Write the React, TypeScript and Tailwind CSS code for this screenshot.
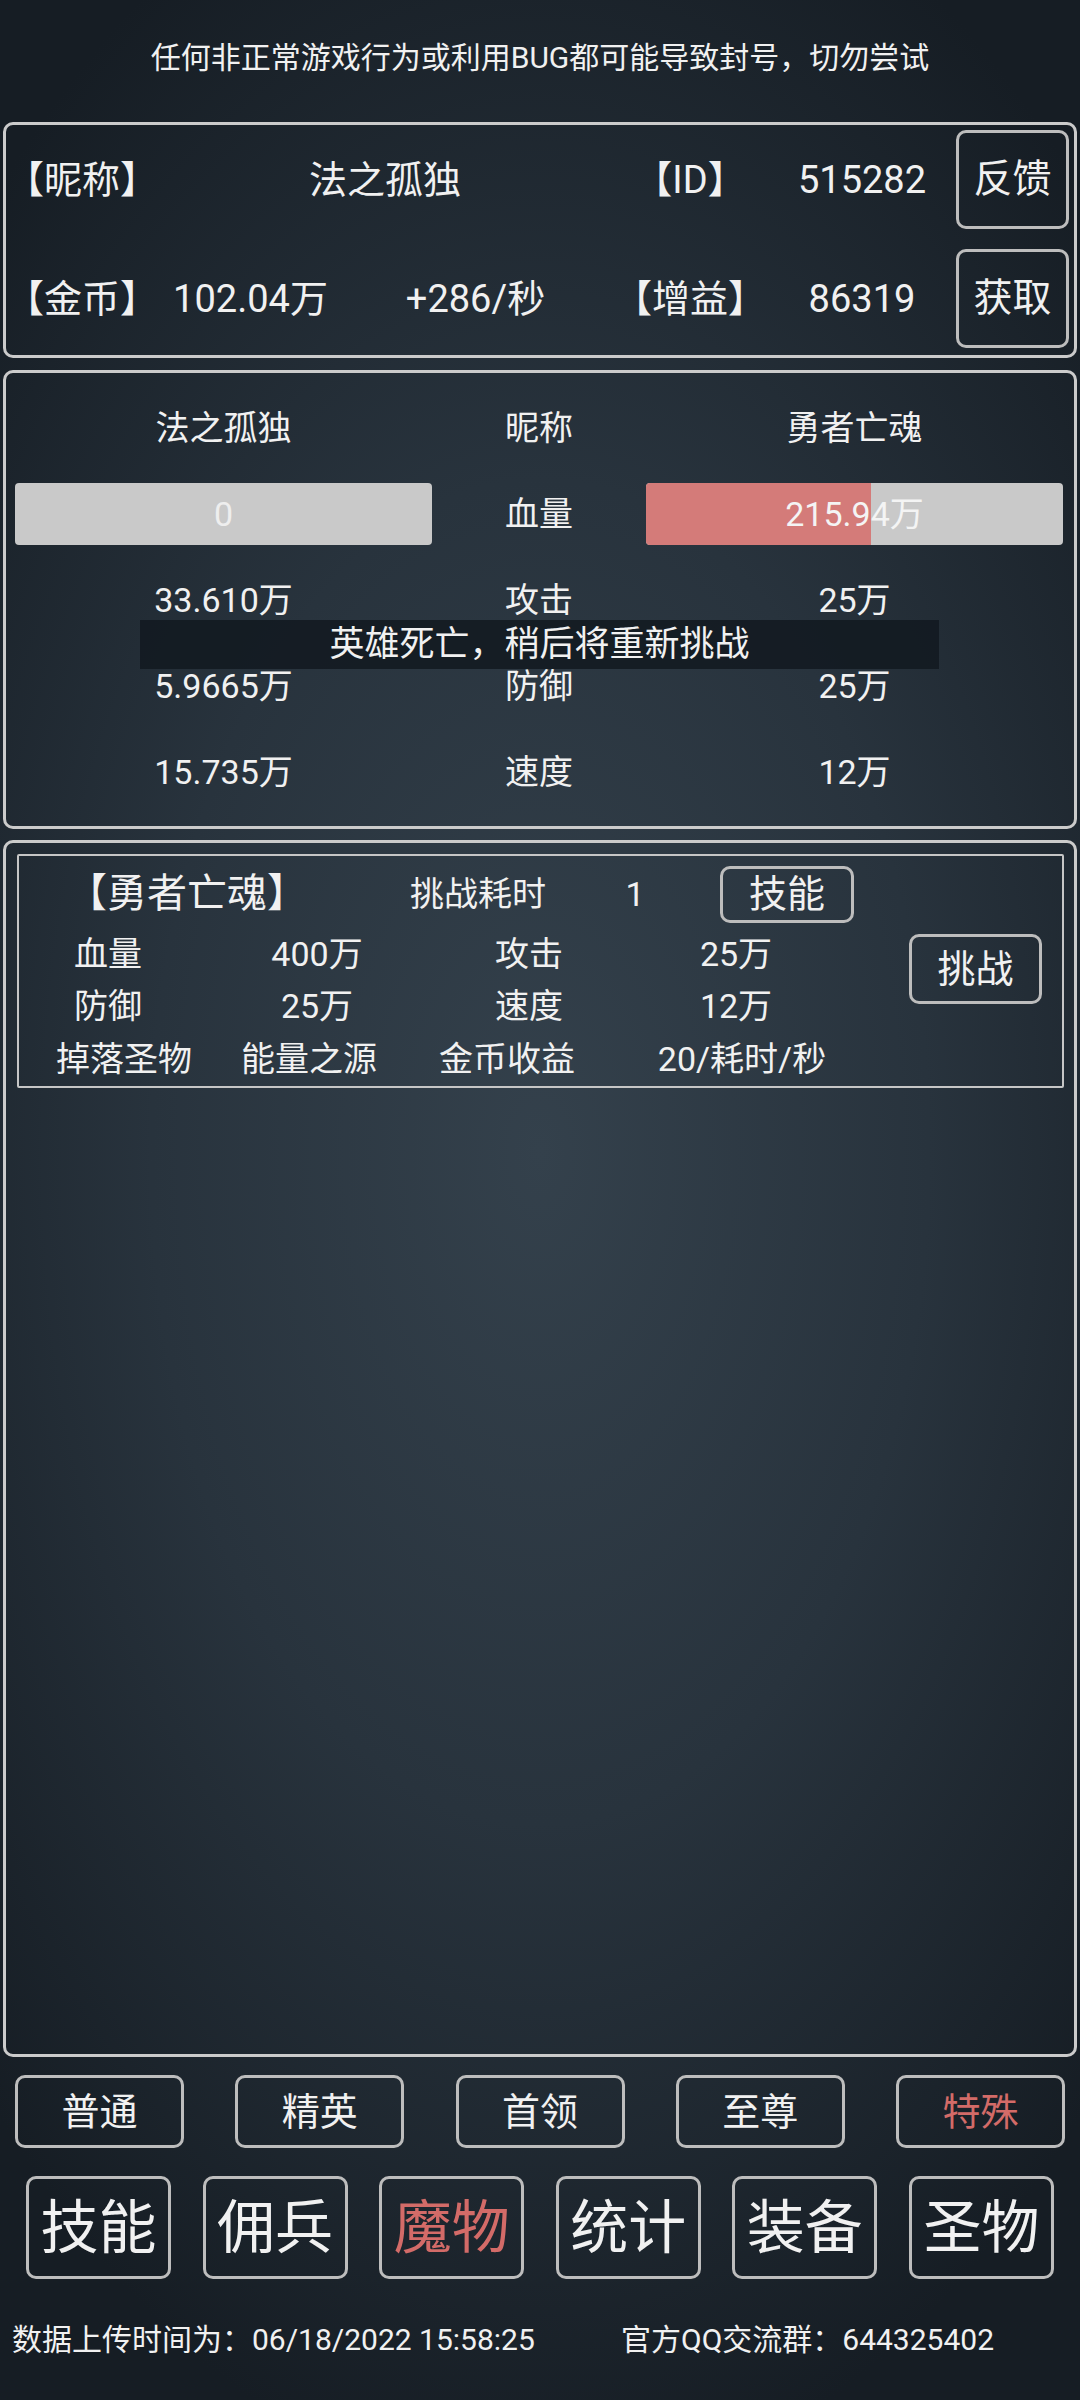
export default function App() {
  const tiers = ['普通', '精英', '首领', '至尊', '特殊']
  const navs = ['技能', '佣兵', '魔物', '统计', '装备', '圣物']

  const compare = [
    ['33.610万', '攻击', '25万'],
    ['5.9665万', '防御', '25万'],
    ['15.735万', '速度', '12万'],
  ]

  return (
    <div className="w-[1080px] h-[2400px] overflow-hidden flex flex-col bg-[radial-gradient(ellipse_72%_56%_at_50%_48%,#34414c_0%,#28333d_50%,#161d24_100%)] text-[#f1f1f1] font-['Roboto','Noto_Sans_CJK_SC',sans-serif] leading-none">
      {/* notice */}
      <div className="h-[116px] flex items-center justify-center text-[30px]">
        任何非正常游戏行为或利用BUG都可能导致封号，切勿尝试
      </div>

      <div className="px-[3px] flex flex-col">
        {/* player info */}
        <div className="mt-[6px] border-[3px] border-[#cbcbcb] rounded-[10px] pt-[5px] pb-[7px] flex flex-col gap-[20px] text-[38px]">
          <div className="flex items-center h-[99px]">
            <div className="w-[150px] text-center">【昵称】</div>
            <div className="w-[444px] pl-[14px] text-center">法之孤独</div>
            <div className="w-[180px] text-center">【ID】</div>
            <div className="w-[164px] text-center">515282</div>
            <div className="ml-[12px] w-[113px] h-[99px] border-[3px] border-[#bdbdbd] rounded-[10px] flex items-center justify-center text-[39px]">
              反馈
            </div>
          </div>
          <div className="flex items-center h-[99px]">
            <div className="w-[150px] text-center">【金币】</div>
            <div className="w-[189px] text-center">102.04万</div>
            <div className="w-[255px] pl-[6px] text-center">+286/秒</div>
            <div className="w-[180px] text-center">【增益】</div>
            <div className="w-[164px] text-center">86319</div>
            <div className="ml-[12px] w-[113px] h-[99px] border-[3px] border-[#bdbdbd] rounded-[10px] flex items-center justify-center text-[39px]">
              获取
            </div>
          </div>
        </div>

        {/* battle */}
        <div className="relative mt-[12px] h-[459px] border-[3px] border-[#cbcbcb] rounded-[10px] px-[9px] pt-[12px] text-[34px]">
          <div className="grid grid-cols-[417px_214px_417px] auto-rows-[86px] items-center text-center">
            <div>法之孤独</div>
            <div>昵称</div>
            <div>勇者亡魂</div>

            <div className="h-[62px] rounded-[4px] bg-[#c9c9c9] flex items-center justify-center text-[#eeeeee]">
              0
            </div>
            <div>血量</div>
            <div className="relative h-[62px] rounded-[4px] bg-[#c9c9c9] overflow-hidden">
              <div className="h-full bg-[#d47b79]" style={{ width: `${(215.94 / 400) * 100}%` }} />
              <div className="absolute inset-0 flex items-center justify-center text-[#f4f4f4]">215.94万</div>
            </div>

            {compare.map((row) =>
              row.map((cell, i) => <div key={row[1] + i}>{cell}</div>)
            )}
          </div>

          <div className="absolute left-[134px] top-[247px] w-[799px] h-[49px] bg-[#121920]/85 flex items-center justify-center text-[35px]">
            英雄死亡，稍后将重新挑战
          </div>
        </div>

        {/* monster detail */}
        <div className="mt-[11px] h-[1217px] border-[3px] border-[#cbcbcb] rounded-[10px] pl-[11px] pr-[10px] pt-[11px]">
          <div className="border-2 border-[#c6c6c6] rounded-[2px] pt-[4px] text-[34px]">
            <div className="flex items-center h-[68px]">
              <div className="w-[336px] text-center text-[40px]">【勇者亡魂】</div>
              <div className="w-[246px] text-center">挑战耗时</div>
              <div className="w-[68px] text-center">1</div>
              <div className="ml-[51px] w-[134px] h-[57px] border-[3px] border-[#bdbdbd] rounded-[10px] flex items-center justify-center text-[38px]">
                技能
              </div>
            </div>

            <div className="flex">
              <div className="w-[832px] flex flex-col">
                <div className="flex items-center h-[52px] text-center">
                  <div className="w-[178px]">血量</div>
                  <div className="w-[240px]">400万</div>
                  <div className="w-[184px]">攻击</div>
                  <div className="w-[230px]">25万</div>
                </div>
                <div className="flex items-center h-[52px] text-center">
                  <div className="w-[178px]">防御</div>
                  <div className="w-[240px]">25万</div>
                  <div className="w-[184px]">速度</div>
                  <div className="w-[230px]">12万</div>
                </div>
              </div>
              <div className="ml-[58px] mt-[6px] w-[133px] h-[70px] border-[3px] border-[#bdbdbd] rounded-[10px] flex items-center justify-center text-[38px]">
                挑战
              </div>
            </div>

            <div className="flex items-center h-[54px] text-center">
              <div className="w-[210px]">掉落圣物</div>
              <div className="w-[160px]">能量之源</div>
              <div className="w-[236px]">金币收益</div>
              <div className="w-[234px]">20/耗时/秒</div>
            </div>
          </div>
        </div>
      </div>

      {/* tiers */}
      <div className="mt-[18px] px-[15px] flex justify-between">
        {tiers.map((t) => (
          <div
            key={t}
            className={`w-[169px] h-[73px] border-[3px] border-[#bdbdbd] rounded-[10px] flex items-center justify-center text-[38px] ${
              t === '特殊' ? 'text-[#d36b68]' : ''
            }`}
          >
            {t}
          </div>
        ))}
      </div>

      {/* nav */}
      <div className="mt-[28px] px-[26px] flex justify-between">
        {navs.map((n) => (
          <div
            key={n}
            className={`w-[145px] h-[103px] border-[3px] border-[#bdbdbd] rounded-[10px] flex items-center justify-center text-[58px] ${
              n === '魔物' ? 'text-[#d36b68]' : ''
            }`}
          >
            {n}
          </div>
        ))}
      </div>

      {/* footer */}
      <div className="mt-[32px] h-[58px] flex items-center text-[30px]">
        <div className="w-[621px] pl-[12px]">数据上传时间为：06/18/2022 15:58:25</div>
        <div>官方QQ交流群：644325402</div>
      </div>
    </div>
  )
}
